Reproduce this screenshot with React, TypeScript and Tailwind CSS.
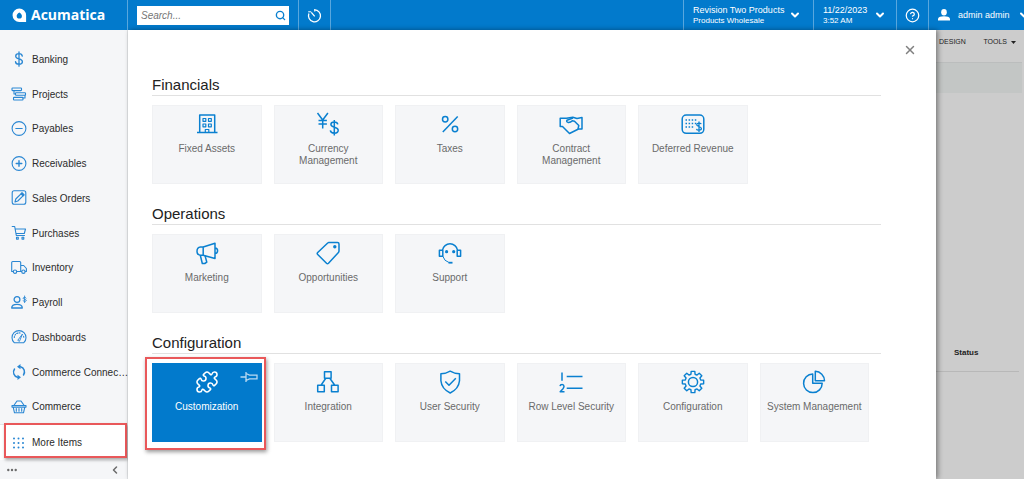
import type { ReactNode } from "react";
import { ChevronDown, ChevronLeft, CircleQuestionMark, Puzzle, Search, X } from "lucide-react";

// small icons of the side menu, 16 x 16
function MenuIcon({ children }: { children: ReactNode }) {
  return (
    <svg
      className="size-4 shrink-0 text-[#2a87d3]"
      viewBox="0 0 16 16"
      fill="none"
      stroke="currentColor"
      strokeWidth="1.1"
      strokeLinecap="round"
      strokeLinejoin="round"
    >
      {children}
    </svg>
  );
}

// workspace tile icons, 24 x 24
function TileIcon({ children }: { children: ReactNode }) {
  return (
    <svg
      className="size-6 shrink-0"
      viewBox="0 0 24 24"
      fill="none"
      stroke="currentColor"
      strokeWidth="1.5"
      strokeLinejoin="round"
    >
      {children}
    </svg>
  );
}

function gearPath() {
  const points: string[] = [];
  for (let i = 0; i < 8; i++) {
    const a = (i * Math.PI) / 4;
    const corners: [number, number][] = [
      [8, -0.26],
      [10.8, -0.17],
      [10.8, 0.17],
      [8, 0.26],
    ];
    corners.forEach(([r, d]) => {
      points.push(`${(12 + r * Math.cos(a + d)).toFixed(2)} ${(12 + r * Math.sin(a + d)).toFixed(2)}`);
    });
  }
  return "M" + points.join("L") + "Z";
}

const menu = [
  {
    label: "Banking",
    icon: (
      <path
        d="M8 .8v14.400M11.300 5.200C11.100 3.600 9.800 2.700 8 2.700S4.700 3.700 4.700 5.200c0 3.600 6.700 1.900 6.700 5.500 0 1.500-1.400 2.500-3.400 2.500s-3.400-1-3.500-2.600"
        strokeWidth="1.300"
      />
    ),
  },
  {
    label: "Projects",
    icon: (
      <>
        <rect x="1" y="2" width="9.500" height="2.600" rx=".6" />
        <rect x="4.500" y="6.700" width="10" height="2.600" rx=".6" />
        <rect x="2.500" y="11.400" width="9.500" height="2.600" rx=".6" />
        <path d="M3 4.600v3.400h1.500M14 9.300v2.700h-2" />
      </>
    ),
  },
  {
    label: "Payables",
    icon: (
      <>
        <circle cx="8" cy="7.500" r="6.900" />
        <path d="M4.800 7.500h6.400" />
      </>
    ),
  },
  {
    label: "Receivables",
    icon: (
      <>
        <circle cx="8" cy="7.500" r="6.900" />
        <path d="M5.200 7.500h5.600M8 4.700v5.600" strokeWidth="1.400" />
      </>
    ),
  },
  {
    label: "Sales Orders",
    icon: (
      <>
        <rect x="1.200" y=".8" width="13.600" height="13.400" rx="2" />
        <path d="M4 12l.8-3L11 2.800l2 2L6.800 11z" />
        <path d="M10 3.800l2 2 1-1-2-2z" fill="currentColor" />
      </>
    ),
  },
  {
    label: "Purchases",
    icon: (
      <>
        <path d="M1.200 1.500h2.500l1.600 9h8.200M4.200 4h10.300l-1.200 4.500H5" />
        <rect x="5.500" y="12.300" width="1.800" height="1.800" />
        <rect x="11" y="12.300" width="1.800" height="1.800" />
      </>
    ),
  },
  {
    label: "Inventory",
    icon: (
      <>
        <path d="M2.300 11.500H.7v-9q0-1 1-1h7q1 0 1 1v9H5.800M9.700 5.500h3l2.700 3v3h-1.200M9.700 11.500h1" />
        <circle cx="4" cy="11.700" r="1.700" />
        <circle cx="12.400" cy="11.700" r="1.700" />
      </>
    ),
  },
  {
    label: "Payroll",
    icon: (
      <>
        <circle cx="6" cy="4.500" r="2.900" strokeWidth="1.300" />
        <path d="M.7 13c0-2.600 2-3.600 5.300-3.600s5.300 1 5.300 3.600z" strokeWidth="1.300" />
        <path d="M13.600 1v6.600M15.200 3c-.2-.8-3.100-1-3.100.3 0 1.200 3.200.8 3.200 2.200 0 1.200-3 1.200-3.300.1" strokeWidth=".9" />
      </>
    ),
  },
  {
    label: "Dashboards",
    icon: (
      <>
        <path d="M3.200 13.700a7 7 0 1 1 9.600 0z" />
        <path d="M3.300 8.500a4.700 4.700 0 0 1 7-4M12.600 7.300q.3 1 .1 2" strokeDasharray="1 1.400" />
        <path d="M7 11l4.500-6L8.600 12z" strokeWidth=".9" />
      </>
    ),
  },
  {
    label: "Commerce Connec…",
    icon: (
      <>
        <path d="M6.500 13.200A5.300 5.300 0 0 1 3.500 5M9.500 2.800a5.300 5.300 0 0 1 3 8.200" strokeWidth="1.500" />
        <path d="M9.500 0v5.200L6 2.700zM6.500 16v-5.200L10 13.300z" fill="currentColor" stroke="none" />
      </>
    ),
  },
  {
    label: "Commerce",
    icon: (
      <>
        <path d="M1 6.500h14v1.600H1zM2.200 8.100l1.300 5.700h9l1.300-5.700M3 6.300L6 2M13 6.300L10 2M6 2h4" />
        <path d="M5.300 9.500v2.800M8 9.500v2.800M10.700 9.500v2.800" />
      </>
    ),
  },
];

const sections = [
  {
    title: "Financials",
    tiles: [
      {
        label: "Fixed Assets",
        icon: (
          <TileIcon>
            <path d="M2 20.500h20.500M4.700 20.500V3h15v17.500" />
            <path d="M8 6.500h2.800v2.800H8zM13.500 6.500h2.800v2.800h-2.800zM8 12h2.800v2.800H8zM13.500 12h2.800v2.800h-2.800zM10.300 20.500v-3h3.500v3" strokeWidth="1.200" />
          </TileIcon>
        ),
      },
      {
        label: "Currency Management",
        icon: (
          <TileIcon>
            <path d="M1.500 1l5.200 7 5.200-7M6.700 8v8.500M2.500 8.500h8.400M2.500 12h8.400" />
            <path d="M18.300 8v15.500M21.800 12.300c-.3-1.700-1.700-2.400-3.500-2.400s-3.400.8-3.400 2.500c0 3.500 7.300 2.200 7.300 5.900 0 1.800-1.700 2.900-3.900 2.900s-3.700-.8-4-2.800" />
          </TileIcon>
        ),
      },
      {
        label: "Taxes",
        icon: (
          <TileIcon>
            <circle cx="7.200" cy="7.200" r="2.700" />
            <circle cx="17" cy="17" r="2.700" />
            <path d="M4.800 20L19.700 4.500" />
          </TileIcon>
        ),
      },
      {
        label: "Contract Management",
        icon: (
          <TileIcon>
            <path d="M7.500 6.200H1.200v8.300h2.300l7 7L19.500 17H23V5.500l-5 1-4.200-1.300L7.500 6.200" />
            <path d="M14 6L8 8.200q-1 1.500 1 2.200 2.500.3 4.300-1.600l2.200.4 4.300 4.300-.8 3.500" />
          </TileIcon>
        ),
      },
      {
        label: "Deferred Revenue",
        icon: (
          <TileIcon>
            <rect x="1.200" y="3" width="21.600" height="18.300" rx="4" />
            <path d="M4.500 8h11M4.500 11.500h11M4.500 15h8" strokeDasharray="1.500 1.600" />
            <path d="M18 9.500v10.500M20.200 12.200c-.3-1.500-4.500-1.500-4.500.5 0 1.900 4.700 1.700 4.700 3.800s-4.500 2.200-4.900.3" strokeWidth="1.300" />
          </TileIcon>
        ),
      },
    ],
  },
  {
    title: "Operations",
    tiles: [
      {
        label: "Marketing",
        icon: (
          <TileIcon>
            <path d="M8.200 6L20 2.200v15.300l-11.800-3.300zM8.200 6H5.500Q2 6.500 2 10.200t3.500 4h2.700M20 7q2.600.3 2.600 2.700T20 12.500" />
            <path d="M5.300 14.300l2 8.200h2.500l2-1.300-1.700-6.300" />
          </TileIcon>
        ),
      },
      {
        label: "Opportunities",
        icon: (
          <TileIcon>
            <path d="M12.800 1.500h8.700q1.500 0 1.500 1.500v7q0 1-.8 1.700L12.500 22.300q-1 1-2 0L1.700 13.500q-1-1 0-2l10-9.500q.5-.5 1.100-.5z" />
            <circle cx="18.800" cy="5.700" r="1.700" fill="currentColor" stroke="none" />
          </TileIcon>
        ),
      },
      {
        label: "Support",
        icon: (
          <TileIcon>
            <path d="M1.400 9.200h3.400v6H1.400zM19.200 9.200h3.400v6h-3.400zM4.500 9.200a7.600 7.600 0 0 1 15 0" />
            <path d="M4.800 15.200q1.500 5 6 6.200" strokeWidth="1" />
            <path d="M10.500 21.700h4" strokeWidth="1.800" />
            <circle cx="8.600" cy="10.700" r="1.600" fill="currentColor" stroke="none" />
            <circle cx="15.700" cy="10.700" r="1.600" fill="currentColor" stroke="none" />
          </TileIcon>
        ),
      },
    ],
  },
  {
    title: "Configuration",
    tiles: [
      {
        label: "Customization",
        active: true,
        icon: <Puzzle className="size-6 shrink-0" strokeWidth={1.6} />,
      },
      {
        label: "Integration",
        icon: (
          <TileIcon>
            <path d="M8.500 1.700h6.600v6.600H8.500zM1.700 15.200h6.600v6.600H1.700zM15.500 15.200h6.600v6.600h-6.600zM9.800 8.300L5 15.200M13.800 8.300l5 6.900" />
          </TileIcon>
        ),
      },
      {
        label: "User Security",
        icon: (
          <TileIcon>
            <path d="M12.200 1.200q4.500 2.600 9.300 2.600v7q-.8 8.200-9.300 12.200-8.500-4-9.300-12.200v-7q4.800 0 9.300-2.600z" />
            <path d="M7.300 11.500l3.700 3.800 6.800-7" />
          </TileIcon>
        ),
      },
      {
        label: "Row Level Security",
        icon: (
          <TileIcon>
            <path d="M3 2.500v8.300M7.700 6.500h15.800M7.700 18.200h15.800M1 16.200q.3-1.700 2.100-1.700t1.900 1.800q0 1.200-1.200 2.600L1.200 21.800h4.300" />
          </TileIcon>
        ),
      },
      {
        label: "Configuration",
        icon: (
          <TileIcon>
            <path d={gearPath()} strokeWidth="1.400" />
            <circle cx="12" cy="12" r="4.600" />
          </TileIcon>
        ),
      },
      {
        label: "System Management",
        icon: (
          <TileIcon>
            <path d="M10.700 4a9.300 9.300 0 1 0 9.500 9.300h-9.500z" />
            <path d="M13.300 1.300a9.500 9.500 0 0 1 9.200 9.400h-9.200z" />
          </TileIcon>
        ),
      },
    ],
  },
];

function Header() {
  return (
    <header className="flex h-[30px] shrink-0 overflow-hidden bg-[#027acc] text-white">
      <a href="#" className="flex w-32 shrink-0 items-center gap-1 border-r border-[#58a7de] pl-3">
        <svg className="size-[15px]" viewBox="0 0 15 15">
          <path
            fill="currentColor"
            fillRule="evenodd"
            d="M7.300.5a6.800 6.800 0 0 1 6.800 6.800V14H7.300a6.750 6.750 0 0 1 0-13.500zm0 4C5.500 5.600 4.700 6.700 4.700 7.900a2.600 2.600 0 0 0 5.200 0C9.900 6.700 9.100 5.600 7.300 4.500z"
          />
        </svg>
        <span className="font-['Open_Sans',sans-serif] text-[14px] leading-5 font-bold">Acumatica</span>
      </a>
      <div className="flex w-[171px] shrink-0 items-center border-r border-[#58a7de] pr-[9px] pl-[9px]">
        <label className="flex h-[19px] w-full items-center bg-white pr-[3px] pl-1">
          <input
            type="text"
            aria-label="Search"
            placeholder="Search..."
            className="min-w-0 flex-1 text-[10px] text-gray-700 italic outline-none placeholder:text-[#757575]"
          />
          <Search className="size-[11px] text-[#0a80d0]" strokeWidth={3} />
        </label>
      </div>
      <button aria-label="Recent" className="flex w-8 shrink-0 items-center justify-center border-r border-[#58a7de]">
        <svg className="size-[15px]" viewBox="0 0 15 15" fill="none" stroke="currentColor" strokeWidth="1.300">
          <path d="M7.500 1.800a6 6 0 1 1-5.600 3.800M7.500 1.800h-.2M4.300 4.300l3.400 4" />
          <path d="M1.200 3.800h3M7.800 1v2.600" strokeWidth="1" />
        </svg>
      </button>
      <div className="flex-1" />
      <button className="flex w-[130px] shrink-0 items-center justify-between border-l border-[#58a7de] pr-3 pl-[9px] text-left">
        <span>
          <span className="block text-[9px] leading-[11px]">Revision Two Products</span>
          <span className="block text-[8px] leading-[10px]">Products Wholesale</span>
        </span>
        <ChevronDown className="size-3" strokeWidth={4} />
      </button>
      <button className="flex w-[83px] shrink-0 items-center justify-between border-l border-[#58a7de] pr-2.5 pl-[9px] text-left">
        <span>
          <span className="block text-[9px] leading-[11px]">11/22/2023</span>
          <span className="block text-[8px] leading-[10px]">3:52 AM</span>
        </span>
        <ChevronDown className="size-3" strokeWidth={4} />
      </button>
      <button aria-label="Help" className="flex w-8 shrink-0 items-center justify-center border-l border-[#58a7de]">
        <CircleQuestionMark className="size-[15px]" />
      </button>
      <button className="flex w-24 shrink-0 items-center gap-2 border-l border-[#58a7de] pl-[9px]">
        <svg className="size-3 shrink-0" viewBox="0 0 12 12" fill="currentColor">
          <ellipse cx="6" cy="3.300" rx="2.800" ry="3.200" />
          <path d="M0 11.500V9.500Q1 7.200 6 7.200t6 2.300v2z" />
        </svg>
        <span className="shrink-0 text-[9px] leading-3">admin admin</span>
        <ChevronDown className="size-3 shrink-0" strokeWidth={4} />
      </button>
    </header>
  );
}

function Sidebar() {
  return (
    <aside className="flex w-32 shrink-0 flex-col border-r border-[#e2e4e6] bg-[#f5f6f8] pt-3">
      <nav className="flex flex-1 flex-col text-[10px] text-[#2b2b2b]">
        {menu.map((item) => (
          <a key={item.label} href="#" className="flex flex-1 items-center gap-[5px] pl-[11px]">
            <MenuIcon>{item.icon}</MenuIcon>
            <span className="whitespace-nowrap">{item.label}</span>
          </a>
        ))}
        <a href="#" className="relative flex flex-1 items-center gap-[5px] border-t border-[#e2e4e6] bg-white pl-[11px]">
          <MenuIcon>
            <path d="M3 3.500h10.500M3 8h10.500M3 12.500h10.500" strokeWidth="2" strokeDasharray="0 4.500" />
          </MenuIcon>
          <span>More Items</span>
          <span className="absolute -top-0.5 right-0 bottom-0.5 left-1 border-2 border-[#e9585a] shadow-[1px_2px_3px_rgba(0,0,0,0.35)]" />
        </a>
      </nav>
      <div className="flex h-[19px] items-center justify-between pr-1.5 pl-[7px] text-[#6b6b6b]">
        <button aria-label="More options">
          <svg className="h-2.5 w-2.5" viewBox="0 0 10 10" fill="currentColor">
            <circle cx="1.300" cy="5" r="1.200" />
            <circle cx="5" cy="5" r="1.200" />
            <circle cx="8.700" cy="5" r="1.200" />
          </svg>
        </button>
        <button aria-label="Collapse menu">
          <ChevronLeft className="size-3" strokeWidth={3} />
        </button>
      </div>
    </aside>
  );
}

function Tile({ label, icon, active }: { label: string; icon: ReactNode; active?: boolean }) {
  if (active) {
    return (
      <a
        href="#"
        className="relative flex h-[79px] flex-col items-center bg-[#027acc] px-1.5 pt-[7px] text-center text-[10px] leading-3 text-white"
      >
        {icon}
        <span className="mt-[7px]">{label}</span>
        <svg
          className="absolute top-2 right-1 h-3 w-[18px] text-[#b9d9f1]"
          viewBox="0 0 18 12"
          fill="none"
          stroke="currentColor"
          strokeWidth="1.300"
        >
          <path d="M.5 6H6M6 1v10M6 2.500l3.500 1.700h7.500v3.600H9.500L6 9.500" />
        </svg>
        <span className="absolute -top-1.5 -right-1 -bottom-2 -left-[7px] border-2 border-[#e9585a] shadow-[1px_2px_4px_rgba(0,0,0,0.4)]" />
      </a>
    );
  }

  return (
    <a
      href="#"
      className="flex h-[79px] flex-col items-center border border-[#f0f1f3] bg-[#f5f6f8] px-1.5 pt-1.5 text-center text-[10px] leading-3 text-[#6a6a6a]"
    >
      <span className="text-[#0a80d0]">{icon}</span>
      <span className="mt-[7px]">{label}</span>
    </a>
  );
}

export default function App() {
  return (
    <div className="flex min-h-screen flex-col bg-white font-['Liberation_Sans',Arial,sans-serif]">
      <Header />
      <div className="flex flex-1">
        <Sidebar />
        <main className="z-10 flex-1 bg-white pr-[55px] pl-6 shadow-[2px_0_5px_rgba(0,0,0,0.4)]">
          <div className="-mr-9 flex h-[45px] items-start justify-end pt-[13px]">
            <button aria-label="Close" className="text-[#808080]">
              <X className="size-3.5" strokeWidth={2.5} />
            </button>
          </div>
          {sections.map((section) => (
            <section key={section.title} className="mb-5">
              <h2 className="border-b border-[#e1e1e1] text-[15px] leading-5 text-[#222222]">{section.title}</h2>
              <div className="mt-[9px] grid grid-cols-6 gap-3 pr-3">
                {section.tiles.map((tile) => (
                  <Tile key={tile.label} {...tile} />
                ))}
              </div>
            </section>
          ))}
        </main>
        <div className="w-[88px] shrink-0 bg-[#cccccc] text-[#222222]">
          <div className="flex h-8 items-start justify-between pt-2 pr-2 pl-[3px] text-[7px] leading-2">
            <button>DESIGN</button>
            <button className="flex items-center gap-1">
              TOOLS
              <svg className="h-[3px] w-[5px]" viewBox="0 0 5 3" fill="currentColor">
                <path d="M0 0h5L2.500 3z" />
              </svg>
            </button>
          </div>
          <div className="mr-0.5 h-[31px] border-t border-[#bbbdbd] bg-[#c3c6c5]" />
          <div className="mt-[254px] mr-[5px] h-[25px] border-b border-[#b8b8b8] pl-[18px] text-[8px] leading-3 font-bold">
            Status
          </div>
        </div>
      </div>
    </div>
  );
}
